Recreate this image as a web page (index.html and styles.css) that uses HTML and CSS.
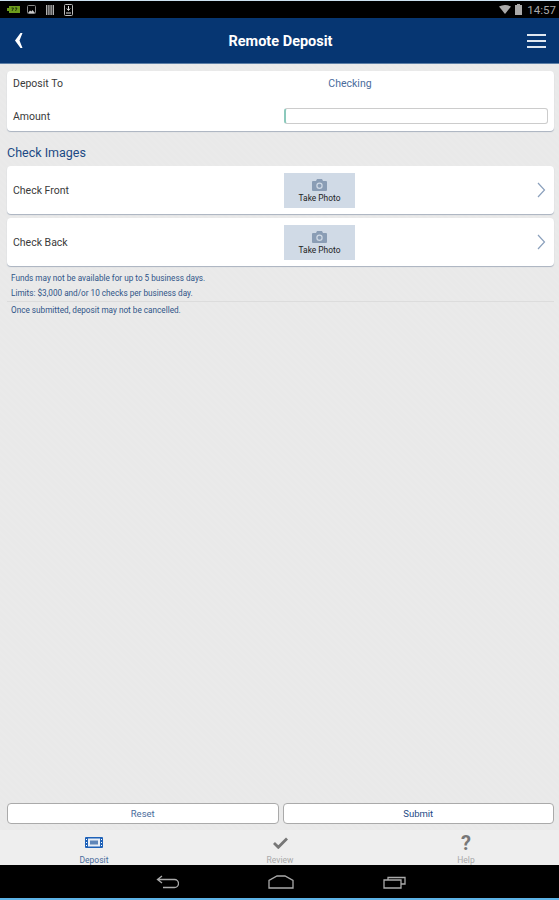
FILE: index.html
```html
<!DOCTYPE html>
<html lang="en">

<head>
    <meta charset="UTF-8" />
    <meta name="viewport" content="width=device-width, initial-scale=1.0" />
    <title>Remote Deposit</title>
    <link rel="stylesheet" href="styles.css">
</head>

<body>
    <div class="status-bar">
        <div class="status-left">
            <svg class="battery-icon" width="13" height="7" viewBox="0 0 13 7"><path d="M2 0h11v7H2V5H0V2h2z" fill="#6c9c1c"/><path d="M4.500 2h2L5 5M8 2h2L8.500 5" fill="none" stroke="#10200a" stroke-width=".8"/></svg>
            <svg width="9" height="9" viewBox="0 0 9 9"><rect x=".5" y=".5" width="8" height="8" rx="1" fill="none" stroke="#8a8a8a"/><path d="M1 8l2-2.500 1.500 1L5.500 5 8 8z" fill="#ccc"/></svg>
            <svg width="8" height="10" viewBox="0 0 8 10"><path d="M.7 0v10M2.900 0v10M5.100 0v10M7.300 0v10" stroke="#bbb" stroke-width="1.300"/></svg>
            <svg width="9" height="12" viewBox="0 0 9 12"><rect x=".5" y=".5" width="8" height="11" rx="1" fill="none" stroke="#bbb"/><path d="M4.500 2v4M2.800 4.500l1.700 2 1.700-2M2 9h5" stroke="#ddd" fill="none"/></svg>
        </div>
        <div class="status-right">
            <svg width="12" height="9" viewBox="0 0 12 9"><path d="M0 1.500Q6-1.500 12 1.500L6 9z" fill="#aaa"/></svg>
            <svg width="7" height="11" viewBox="0 0 7 11"><path d="M2 0h3v1h2v10H0V1h2z" fill="#aaa"/></svg>
            <span>14:57</span>
        </div>
    </div>

    <header class="app-bar">
        <svg class="back" width="8" height="15" viewBox="0 0 8 15"><path d="M5.500 0L0 7.500 5.500 15h2L4.500 7.500 7.500 0z" fill="#fff"/></svg>
        <h1>Remote Deposit</h1>
        <div class="menu"><i></i><i></i><i></i></div>
    </header>

    <main class="content">
        <section class="card top-card">
            <div class="row">
                <label>Deposit To</label>
                <div class="value">Checking</div>
            </div>
            <div class="row amount-row">
                <label>Amount</label>
                <div class="amount-input"></div>
            </div>
        </section>

        <h2>Check Images</h2>

        <section class="card photo-card">
            <label>Check Front</label>
            <div class="take-photo">
                <svg width="15" height="12" viewBox="0 0 15 12"><path d="M1 2h3l1-2h5l1 2h3a1 1 0 0 1 1 1v8a1 1 0 0 1-1 1H1a1 1 0 0 1-1-1V3a1 1 0 0 1 1-1z" fill="#8a9db5"/><circle cx="7.500" cy="6.800" r="3.200" fill="#d0dae6"/><circle cx="7.500" cy="6.800" r="2" fill="#8a9db5"/></svg>
                <span>Take Photo</span>
            </div>
            <svg class="chevron" width="9" height="16" viewBox="0 0 9 16"><path d="M1 1l6.500 7L1 15" fill="none" stroke="#8ba0bc" stroke-width="1.200"/></svg>
        </section>

        <section class="card photo-card">
            <label>Check Back</label>
            <div class="take-photo">
                <svg width="15" height="12" viewBox="0 0 15 12"><path d="M1 2h3l1-2h5l1 2h3a1 1 0 0 1 1 1v8a1 1 0 0 1-1 1H1a1 1 0 0 1-1-1V3a1 1 0 0 1 1-1z" fill="#8a9db5"/><circle cx="7.500" cy="6.800" r="3.200" fill="#d0dae6"/><circle cx="7.500" cy="6.800" r="2" fill="#8a9db5"/></svg>
                <span>Take Photo</span>
            </div>
            <svg class="chevron" width="9" height="16" viewBox="0 0 9 16"><path d="M1 1l6.500 7L1 15" fill="none" stroke="#8ba0bc" stroke-width="1.200"/></svg>
        </section>

        <ul class="notes">
            <li>Funds may not be available for up to 5 business days.</li>
            <li class="ruled">Limits: $3,000 and/or 10 checks per business day.</li>
            <li class="last">Once submitted, deposit may not be cancelled.</li>
        </ul>

        <div class="actions">
            <button class="reset">Reset</button>
            <button class="submit">Submit</button>
        </div>
    </main>

    <nav class="tabs">
        <div class="tab active">
            <div class="tab-icon">
                <svg class="deposit-icon" width="18" height="11" viewBox="0 0 18 11"><rect width="18" height="11" rx="1" fill="#1f62b8"/><rect x="3" y="1.500" width="12" height="8" fill="#e8eef6"/><rect x="5" y="3.500" width="8" height="4" fill="#5f86b8"/><path d="M1 2.500h1M1 5.500h1M1 8.500h1M16 2.500h1M16 5.500h1M16 8.500h1" stroke="#fff"/></svg>
            </div>
            <span>Deposit</span>
        </div>
        <div class="tab">
            <div class="tab-icon">
                <svg width="15" height="12" viewBox="0 0 15 12"><path d="M1 6l4.300 4.300L14 1.500" fill="none" stroke="#777" stroke-width="2.800"/></svg>
            </div>
            <span>Review</span>
        </div>
        <div class="tab">
            <div class="tab-icon"><b class="help-mark">?</b></div>
            <span>Help</span>
        </div>
    </nav>

    <footer class="nav-bar">
        <svg width="23" height="14" viewBox="0 0 23 14"><path d="M6 1L1.500 4.500 6 8M2 4.500h16.500a3.800 3.800 0 0 1 0 8H7" fill="none" stroke="#aaa" stroke-width="1.300"/></svg>
        <svg width="26" height="14" viewBox="0 0 26 14"><path d="M1 13V5.500L9 1h8l8 4.500V13z" fill="none" stroke="#aaa" stroke-width="1.300"/></svg>
        <svg width="24" height="14" viewBox="0 0 24 14"><path d="M1 5h17v8H1zM5 5V2.500h17V9h-4" fill="none" stroke="#aaa" stroke-width="1.300"/></svg>
    </footer>
</body>

</html>
```

FILE: styles.css
```css
html,
body {
    height: 100%;
}

body {
    font-family: Roboto, 'Liberation Sans', sans-serif;
    background: #e9e9e9;
    margin: 0;
    padding: 0;
    display: flex;
    flex-direction: column;
    overflow: hidden;
    color: #333;
}

.status-bar {
    height: 17px;
    background: #000;
    border-top: 1px solid #cfe3f2;
    display: flex;
    justify-content: space-between;
    align-items: center;
    padding: 0 3px 0 7px;
    flex: none;
}

.status-left,
.status-right {
    display: flex;
    align-items: center;
    gap: 10px;
}

.battery-icon {
    margin-right: -3px;
}

.status-right {
    gap: 4px;
    color: #aaa;
    font-size: 11.500px;
}

.status-right span {
    margin-left: 1px;
}

.app-bar {
    height: 45px;
    background: #063672;
    border-bottom: 1px solid #5d7fa6;
    display: grid;
    grid-template-columns: 1fr auto 1fr;
    align-items: center;
    padding: 0 13px 0 15px;
    flex: none;
}

.app-bar h1 {
    margin: 2px 0 0;
    color: #fff;
    font-size: 14.500px;
    font-weight: bold;
}

.menu {
    display: flex;
    flex-direction: column;
    gap: 4px;
    justify-self: end;
}

.menu i {
    display: block;
    width: 19px;
    height: 2px;
    background: #dfe7f0;
}

.content {
    flex: 1;
    display: flex;
    flex-direction: column;
    padding: 7px 5px 6px 7px;
    background-image: repeating-linear-gradient(45deg, rgba(255, 255, 255, 0.06) 0 2px, transparent 2px 5px);
}

.card {
    background: #fff;
    border-radius: 4px;
    box-shadow: 0 1px 1px #a9b2bf;
}

.top-card {
    height: 60px;
}

.row {
    display: flex;
    align-items: center;
    height: 24px;
    padding-left: 6px;
}

.amount-row {
    margin-top: 9px;
}

label {
    width: 271px;
    flex: none;
    font-size: 10.500px;
    color: #3a3a3a;
}

.value {
    width: 132px;
    text-align: center;
    font-size: 10.500px;
    color: #4a6c9c;
}

.amount-input {
    width: 261px;
    height: 14px;
    background: #fff;
    border: 1px solid #ccc;
    border-left: 2px solid #8cc9bc;
    border-radius: 3px;
}

h2 {
    margin: 14px 0 5px;
    font-size: 12.500px;
    font-weight: normal;
    line-height: 16px;
    color: #1c4a85;
}

.photo-card {
    height: 48px;
    margin-bottom: 4px;
    padding: 0 6px;
    display: flex;
    align-items: center;
    box-sizing: border-box;
}

.take-photo {
    width: 71px;
    height: 35px;
    box-sizing: border-box;
    padding-top: 2px;
    background: #d0dae6;
    display: flex;
    flex-direction: column;
    align-items: center;
    justify-content: center;
    gap: 2px;
}

.take-photo span {
    font-size: 8.400px;
    color: #222;
}

.chevron {
    margin-left: auto;
    margin-right: 2px;
}

.notes {
    list-style: none;
    margin: 1px 0 0;
    padding: 0;
    font-size: 8.200px;
    color: #2f5488;
}

.notes li {
    height: 15px;
    line-height: 15px;
    padding-left: 4px;
}

.notes .ruled {
    height: 14.500px;
    border-bottom: 1px solid #dcdcdc;
}

.notes .last {
    margin-top: 1px;
}

.actions {
    margin-top: auto;
    display: flex;
    gap: 4px;
}

button {
    flex: 1;
    height: 21px;
    background: #fff;
    border: 1px solid #aaa;
    border-radius: 4px;
    font-family: inherit;
    font-size: 9.500px;
    padding: 0;
}

.reset {
    color: #4a6c9c;
}

.submit {
    color: #1c4a85;
}

.tabs {
    height: 35px;
    background: #eeeeee;
    display: grid;
    grid-template-columns: repeat(3, 1fr);
    padding: 0 0 0 1px;
    flex: none;
}

.tab {
    display: flex;
    flex-direction: column;
    align-items: center;
    padding-top: 5px;
    font-size: 8.500px;
    color: #aaa;
}

.tab span {
    margin-top: 4px;
    line-height: 10px;
}

.tab.active {
    color: #4a6c9c;
}

.tab-icon {
    height: 16px;
    display: flex;
    align-items: center;
}

.deposit-icon {
    margin-bottom: 2px;
}

.help-mark {
    font-size: 20px;
    line-height: 16px;
    color: #777;
}

.nav-bar {
    height: 35px;
    box-sizing: border-box;
    background: #000;
    border-bottom: 2px solid #5db3e6;
    padding-left: 3px;
    display: flex;
    justify-content: center;
    align-items: center;
    gap: 89px;
    flex: none;
}
```
